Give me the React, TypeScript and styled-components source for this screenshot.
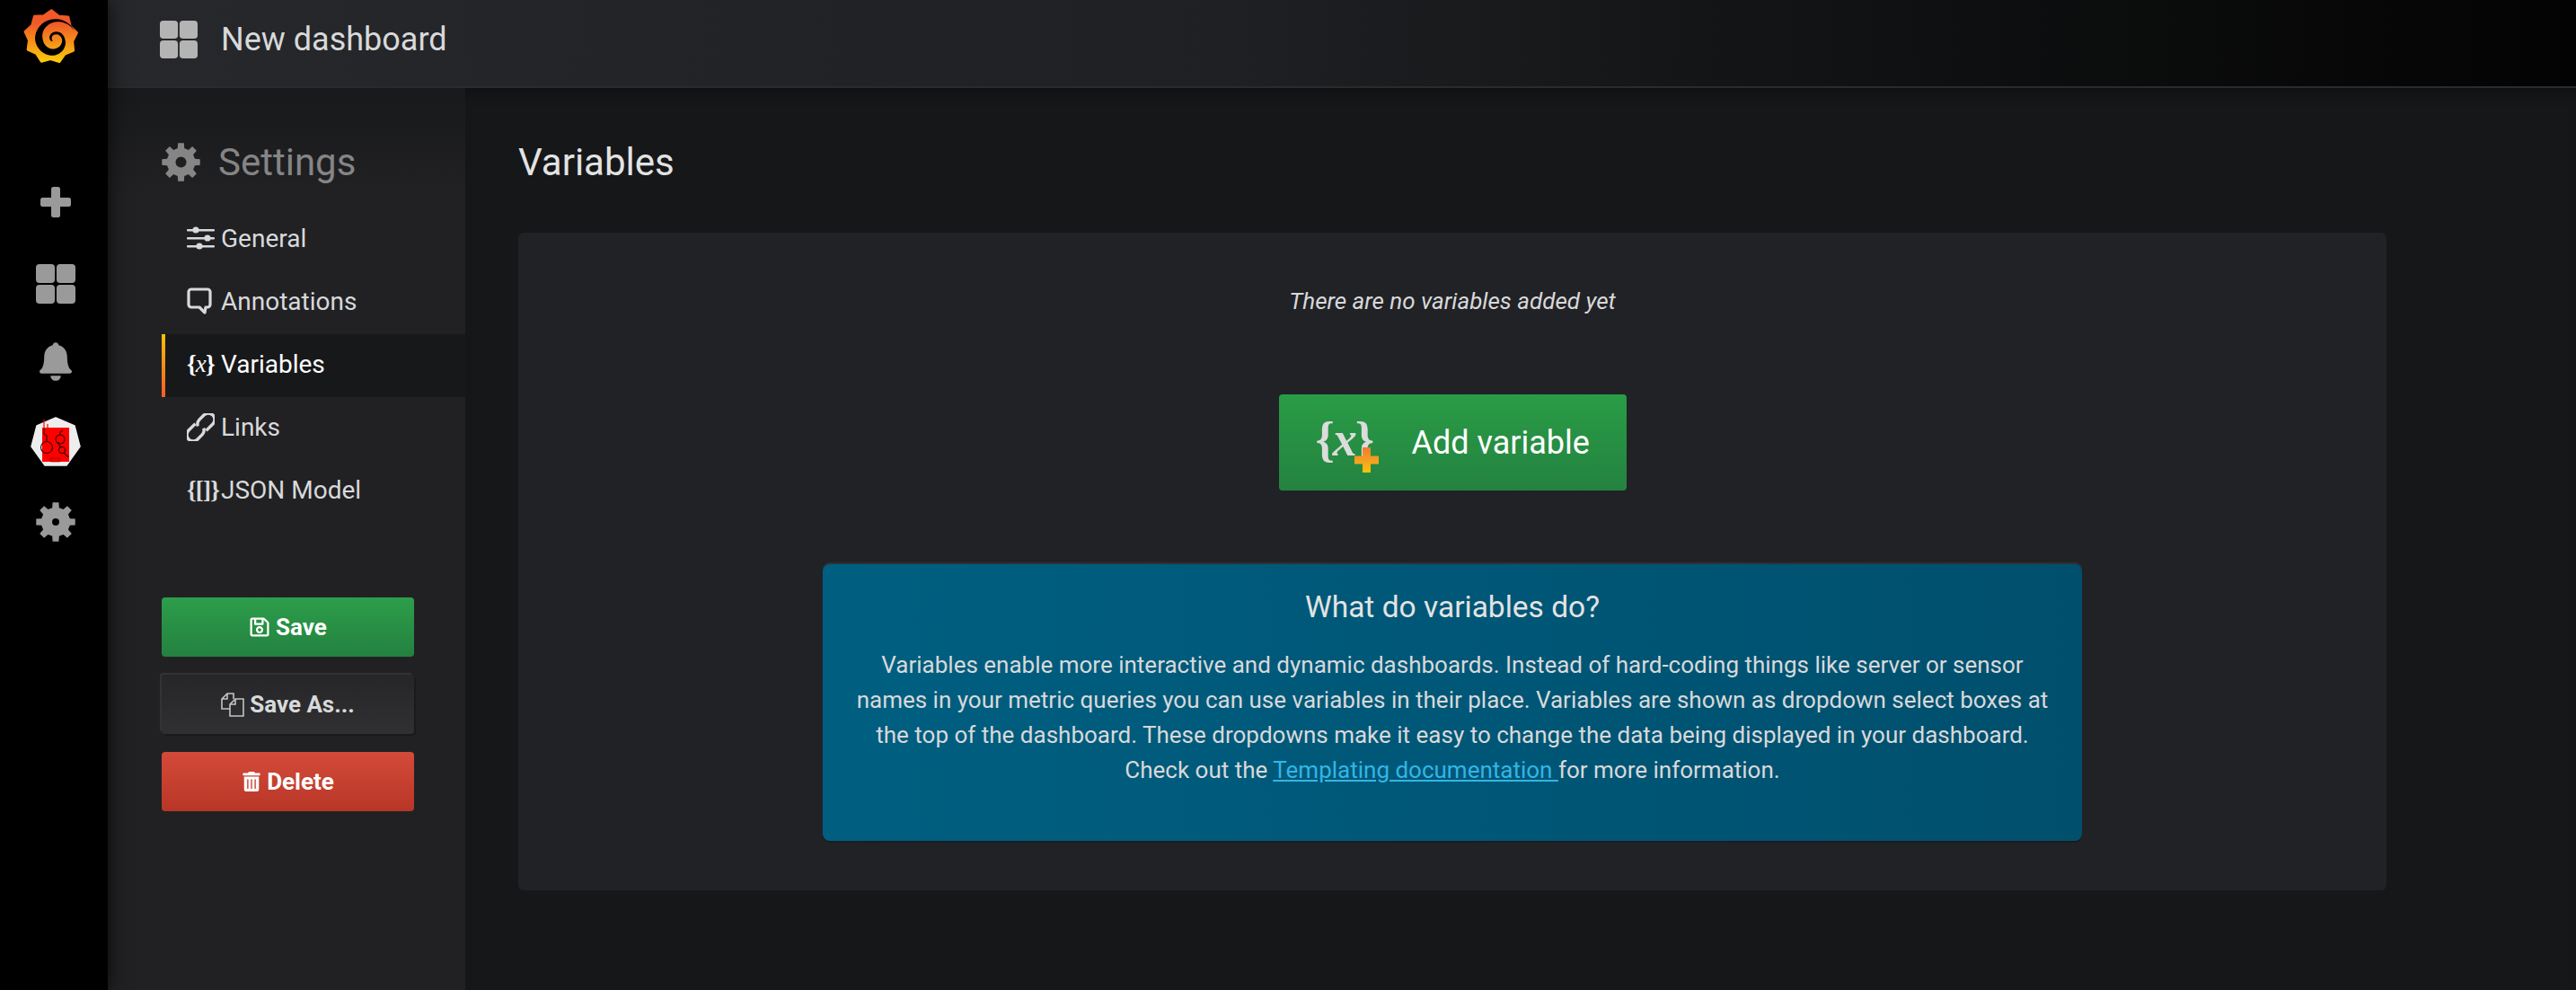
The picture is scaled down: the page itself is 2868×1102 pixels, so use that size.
import React from "react";
import styled, { createGlobalStyle } from "styled-components";
import { FaRegSave, FaTrashAlt } from "react-icons/fa";

const GlobalStyle = createGlobalStyle`
	html, body {
		margin: 0;
		padding: 0;
		background: #161719;
		font-family: Roboto, "Liberation Sans", sans-serif;
	}
	* {
		box-sizing: border-box;
	}
`;

const Shell = styled.div`
	display: flex;
	height: 1102px;
	overflow: hidden;
	background: #161719;
`;

const SideMenu = styled.nav`
	position: relative;
	z-index: 1;
	flex: 0 0 120px;
	display: flex;
	flex-direction: column;
	align-items: center;
	background: #000;
	box-shadow: 0 0 22px rgba(0, 0, 0, 0.75);
`;

const LogoLink = styled.a`
	display: flex;
	height: 180px;
	width: 100%;
	padding: 1px 0 0 20px;
	align-items: flex-start;
`;

const MenuItem = styled.a<{ $nudge?: boolean }>`
	flex: 0 0 89px;
	width: 100%;
	display: flex;
	align-items: center;
	justify-content: center;
	color: #9a9a9a;
	padding-left: 4px;
	padding-top: ${(p) => (p.$nudge ? "4px" : "0")};
`;

const Page = styled.div`
	flex: 1;
	display: flex;
	flex-direction: column;
	min-width: 0;
`;

const TopBar = styled.header`
	flex: 0 0 98px;
	display: flex;
	align-items: center;
	gap: 26px;
	padding: 0 0 8px 58px;
	background: linear-gradient(90deg, #27282b 0%, #1f2023 45%, #101112 72%, #030303 100%);
	border-bottom: 2px solid #2b2b2e;
	color: #b4b4b4;
`;

const DashName = styled.h1`
	margin: 0;
	font-size: 36px;
	font-weight: 400;
	color: #d8d9da;
`;

const Body = styled.div`
	flex: 1;
	display: flex;
	min-height: 0;
`;

const Sidebar = styled.aside`
	flex: 0 0 398px;
	padding: 60px 0 0 60px;
	background: linear-gradient(180deg, #18191b 0, #212124 120px);
`;

const SidebarTitle = styled.h2`
	margin: 0 0 30px;
	height: 44px;
	display: flex;
	align-items: center;
	gap: 20px;
	font-size: 42px;
	font-weight: 400;
	color: #858585;
`;

const SidebarList = styled.ul`
	list-style: none;
	margin: 0 0 83px;
	padding: 0;
`;

const SidebarRow = styled.li<{ $active?: boolean }>`
	height: 70px;
	display: flex;
	align-items: center;
	padding-left: ${(p) => (p.$active ? "24px" : "28px")};
	padding-bottom: 4px;
	font-size: 28px;
	color: ${(p) => (p.$active ? "#fff" : "#d8d9da")};
	background: ${(p) => (p.$active ? "#17181a" : "transparent")};
	border-left: ${(p) => (p.$active ? "4px solid" : "0")};
	border-image: ${(p) =>
		p.$active ? "linear-gradient(180deg, #ffc107, #f05a28) 1" : "none"};
`;

const RowIcon = styled.span`
	flex: 0 0 38px;
	width: 38px;
	min-width: 0;
	display: flex;
	align-items: center;
	font-family: "Liberation Serif", serif;
	font-size: 27px;
	font-weight: 700;
	white-space: nowrap;
	letter-spacing: -0.8px;
	i {
		font-weight: 400;
		font-style: italic;
	}
`;

const Actions = styled.div`
	display: flex;
	flex-direction: column;
	gap: 20px;
	width: 281px;
`;

const ActionButton = styled.button<{ $kind: "save" | "plain" | "danger" }>`
	height: 66px;
	border: 0;
	border-radius: 4px;
	display: flex;
	align-items: center;
	justify-content: center;
	gap: 6px;
	font-family: inherit;
	font-size: 26px;
	font-weight: 700;
	padding: 0;
	color: ${(p) => (p.$kind === "plain" ? "#d8d9da" : "#fff")};
	background: ${(p) =>
		p.$kind === "save"
			? "linear-gradient(180deg, #2c9e4a, #248140)"
			: p.$kind === "danger"
				? "linear-gradient(180deg, #d44a3a, #b83626)"
				: "linear-gradient(180deg, #262628, #303033)"};
	box-shadow: ${(p) =>
		p.$kind === "plain"
			? "-2px -2px 0 #333336, 2px 2px 0 #1a1a1c"
			: "none"};
`;

const Main = styled.main`
	flex: 1;
	padding: 60px 211px 0 59px;
	box-shadow: inset 0 12px 16px -10px rgba(0, 0, 0, 0.45);
`;

const PageTitle = styled.h2`
	margin: 0 0 55px;
	height: 46px;
	line-height: 46px;
	font-size: 42px;
	font-weight: 400;
	color: #e3e3e3;
`;

const Panel = styled.section`
	height: 732px;
	padding-top: 60px;
	display: flex;
	flex-direction: column;
	align-items: center;
	background: #212226;
	border-radius: 6px;
`;

const EmptyNote = styled.em`
	font-size: 26px;
	line-height: 32px;
	color: #d8d9da;
`;

const AddButton = styled.button`
	margin-top: 88px;
	width: 387px;
	height: 107px;
	display: flex;
	align-items: center;
	padding: 0 0 0 41px;
	gap: 37px;
	border: 0;
	border-radius: 4px;
	font-family: inherit;
	font-size: 36px;
	color: #fff;
	background: linear-gradient(180deg, #299c46, #248240);
`;

const AddIcon = styled.span`
	position: relative;
	flex: 0 0 70px;
	height: 58px;
	display: flex;
	align-items: center;
	font-family: "Liberation Serif", serif;
	font-size: 54px;
	font-weight: 700;
	letter-spacing: -2px;
	color: #dcdcdc;
	margin-top: -8px;
	svg {
		position: absolute;
		right: 0;
		bottom: -8px;
	}
`;

const InfoBox = styled.div`
	margin-top: 82px;
	width: 1402px;
	height: 308px;
	padding: 28px 20px 0;
	text-align: center;
	color: #d8d9da;
	border-radius: 8px;
	background: linear-gradient(90deg, #005f81, #004f6d);
	box-shadow: 0 -2px 0 #2f3034, 0 2px 0 #1b1c1f;
`;

const InfoTitle = styled.h3`
	margin: 0 0 25px;
	font-size: 33.5px;
	line-height: 40px;
	font-weight: 400;
	color: #e3e3e3;
`;

const InfoText = styled.p`
	margin: 0;
	font-size: 26px;
	line-height: 39px;
`;

const DocLink = styled.a`
	color: #33b5e5;
	text-decoration: underline;
`;

// gear outline with an evenodd hole in the middle
function gearPath(teeth: number, outer: number, inner: number, hole: number) {
	const c = 50;
	const step = (Math.PI * 2) / teeth;
	const pt = (r: number, a: number) =>
		`${(c + r * Math.sin(a)).toFixed(2)} ${(c - r * Math.cos(a)).toFixed(2)}`;
	let d = "";
	for (let i = 0; i < teeth; i++) {
		const a = i * step;
		const w = step * 0.2;
		const b = step * 0.3;
		d += `${i === 0 ? "M" : "L"}${pt(inner, a - b)}L${pt(outer, a - w)}L${pt(outer, a + w)}L${pt(inner, a + b)}`;
	}
	d += `Z M${c - hole} ${c}a${hole} ${hole} 0 1 0 ${hole * 2} 0a${hole} ${hole} 0 1 0 ${-hole * 2} 0Z`;
	return d;
}

function Gear({ size, hole }: { size: number; hole: number }) {
	return (
		<svg width={size} height={size} viewBox="0 0 100 100" fill="currentColor">
			<path fillRule="evenodd" d={gearPath(8, 50, 37, hole)} />
		</svg>
	);
}

function GridIcon({ size }: { size: number }) {
	const cell = size * 0.478;
	const far = size - cell;
	return (
		<svg width={size} height={size} viewBox={`0 0 ${size} ${size}`} fill="currentColor">
			<rect width={cell} height={cell} rx={size * 0.09} />
			<rect x={far} width={cell} height={cell} rx={size * 0.09} />
			<rect y={far} width={cell} height={cell} rx={size * 0.09} />
			<rect x={far} y={far} width={cell} height={cell} rx={size * 0.09} />
		</svg>
	);
}

function sunPoints() {
	const pts: string[] = [];
	const teeth = 9;
	for (let i = 0; i < teeth * 2; i++) {
		const a = (i / (teeth * 2)) * Math.PI * 2 + 0.02;
		const r = i % 2 === 0 ? 88 : 74;
		pts.push(`${(110 + r * Math.sin(a)).toFixed(1)},${(120 - r * Math.cos(a)).toFixed(1)}`);
	}
	return pts.join(" ");
}

// spiral of the logo: degrees swept, radius, stroke width
const SPIRAL = [
	[25, 72, 1],
	[90, 62, 10],
	[180, 52, 26],
	[270, 43, 22],
	[360, 30, 10],
	[450, 20, 9],
	[540, 12, 8],
	[590, 9, 1],
];

function spiralPath() {
	const cx = 122;
	const cy = 128;
	const outer: string[] = [];
	const inner: string[] = [];
	for (let deg = 25; deg <= 590; deg += 8) {
		const k = SPIRAL.findIndex((s) => s[0] >= deg);
		const hi = SPIRAL[Math.max(k, 1)];
		const lo = SPIRAL[Math.max(k, 1) - 1];
		const f = (deg - lo[0]) / (hi[0] - lo[0]);
		const r = lo[1] + (hi[1] - lo[1]) * f;
		const w = lo[2] + (hi[2] - lo[2]) * f;
		const a = (deg * Math.PI) / 180;
		outer.push(`${(cx + (r + w / 2) * Math.cos(a)).toFixed(1)} ${(cy - (r + w / 2) * Math.sin(a)).toFixed(1)}`);
		inner.push(`${(cx + (r - w / 2) * Math.cos(a)).toFixed(1)} ${(cy - (r - w / 2) * Math.sin(a)).toFixed(1)}`);
	}
	return `M${outer.join("L")}L${inner.reverse().join("L")}Z`;
}

function GrafanaLogo() {
	return (
		<svg width="80" height="80" viewBox="0 0 240 240">
			<defs>
				<linearGradient id="sun" x1="0" y1="0" x2="0" y2="1">
					<stop offset="0.25" stopColor="#f05a28" />
					<stop offset="1" stopColor="#fbca0a" />
				</linearGradient>
			</defs>
			<polygon
				points={sunPoints()}
				fill="url(#sun)"
				stroke="url(#sun)"
				strokeWidth="8"
				strokeLinejoin="round"
			/>
			<path d={spiralPath()} fill="#000" />
		</svg>
	);
}

function PlusIcon() {
	return (
		<svg width="34" height="34" viewBox="0 0 34 34" fill="currentColor">
			<rect x="12" width="10" height="34" rx="2.5" />
			<rect y="12" width="34" height="10" rx="2.5" />
		</svg>
	);
}

function BellIcon() {
	return (
		<svg width="36" height="44" viewBox="0 0 38 46" fill="currentColor">
			<path d="M19 0c2 0 3.500 1.500 3.500 3.200C29 5 32.500 10 32.500 17c0 6.500 1 11 3 14 1 1.400 2.500 1.500 2.500 3.200 0 1.500-1 2.300-2.500 2.300h-33C1 36.500 0 35.700 0 34.200 0 32.500 1.500 32.400 2.500 31c2-3 3-7.500 3-14 0-7 3.500-12 10-13.800C15.500 1.500 17 0 19 0Z" />
			<path d="M13 39h12c0 3.500-2.500 6-6 6s-6-2.500-6-6Z" />
		</svg>
	);
}

function OrgAvatar() {
	return (
		<svg width="75" height="75" viewBox="0 0 75 75">
			<polygon points="37,11 58,20 64,43 49,64 25,64 10,43 16,20" fill="#eee" stroke="#eee" strokeWidth="1.5" strokeLinejoin="round" />
			<rect x="22" y="22" width="30" height="38" fill="#f00" />
			<path d="M24 13v9M28 18v5" stroke="#f00" strokeWidth="1.200" />
			<g fill="none" stroke="#300" strokeWidth="1.100">
				<circle cx="27" cy="44" r="6.500" />
				<circle cx="42" cy="35" r="5" />
				<circle cx="44" cy="47" r="3.500" />
				<path d="M27 37v-6l-3-2v-6M42 30v-3l3-2M46 50l4 4h2M40 38l2 6" />
			</g>
			<rect x="31" y="56" width="11" height="4" rx="1" fill="#e00" stroke="#900" strokeWidth="0.600" />
		</svg>
	);
}

function SlidersIcon() {
	return (
		<svg width="31" height="26" viewBox="0 0 31 26" fill="#d8d9da">
			<rect y="3" width="31" height="2.400" rx="1" />
			<rect y="12" width="31" height="2.400" rx="1" />
			<rect y="21" width="31" height="2.400" rx="1" />
			<circle cx="10" cy="4" r="3.600" />
			<circle cx="23" cy="13" r="3.600" />
			<circle cx="14" cy="22" r="3.600" />
		</svg>
	);
}

function CommentIcon() {
	return (
		<svg width="28" height="31" viewBox="0 0 28 31">
			<path
				d="M5 2h18a3 3 0 0 1 3 3v14a3 3 0 0 1-3 3h-2l-1 6-6-6H5a3 3 0 0 1-3-3V5a3 3 0 0 1 3-3Z"
				fill="none"
				stroke="#d8d9da"
				strokeWidth="3.200"
				strokeLinejoin="round"
			/>
		</svg>
	);
}

function ChainIcon() {
	return (
		<svg width="31" height="31" viewBox="0 0 31 31" fill="none" stroke="#d8d9da" strokeWidth="3.400">
			<g transform="rotate(-45 15.500 15.500)">
				<path d="M14 8.500H3.500a7 7 0 0 0 0 14H11a7 7 0 0 0 6-4" />
				<path d="M17 22.500h10.500a7 7 0 0 0 0-14H20a7 7 0 0 0-6 4" />
			</g>
		</svg>
	);
}

function FilesIcon() {
	return (
		<svg width="26" height="27" viewBox="0 0 26 27" fill="none" stroke="#c4c4c4" strokeWidth="1.600">
			<path d="M10 18H1V7l6-6h7v6M7 1v6H1" />
			<path d="M10 26V13l6-6h9v19ZM16 7v6h-6" />
		</svg>
	);
}

function OrangePlus() {
	return (
		<svg width="27" height="28" viewBox="0 0 27 28">
			<defs>
				<linearGradient id="plusFill" x1="0" y1="0" x2="0" y2="1">
					<stop offset="0" stopColor="#ee7a33" />
					<stop offset="1" stopColor="#fbc30d" />
				</linearGradient>
			</defs>
			<path d="M9 0h9v9.500h9v9h-9V28H9v-9.500H0v-9h9Z" fill="url(#plusFill)" />
		</svg>
	);
}

export default function App() {
	return (
		<>
			<GlobalStyle />
			<Shell>
				<SideMenu>
					<LogoLink>
						<GrafanaLogo />
					</LogoLink>
					<MenuItem>
						<PlusIcon />
					</MenuItem>
					<MenuItem $nudge>
						<GridIcon size={44} />
					</MenuItem>
					<MenuItem>
						<BellIcon />
					</MenuItem>
					<MenuItem>
						<OrgAvatar />
					</MenuItem>
					<MenuItem>
						<Gear size={44} hole={9} />
					</MenuItem>
				</SideMenu>
				<Page>
					<TopBar>
						<GridIcon size={42} />
						<DashName>New dashboard</DashName>
					</TopBar>
					<Body>
						<Sidebar>
							<SidebarTitle>
								<Gear size={43} hole={14} />
								Settings
							</SidebarTitle>
							<SidebarList>
								<SidebarRow>
									<RowIcon>
										<SlidersIcon />
									</RowIcon>
									General
								</SidebarRow>
								<SidebarRow>
									<RowIcon>
										<CommentIcon />
									</RowIcon>
									Annotations
								</SidebarRow>
								<SidebarRow $active>
									<RowIcon>
										{"{"}
										<i>x</i>
										{"}"}
									</RowIcon>
									Variables
								</SidebarRow>
								<SidebarRow>
									<RowIcon>
										<ChainIcon />
									</RowIcon>
									Links
								</SidebarRow>
								<SidebarRow>
									<RowIcon>{"{[]}"}</RowIcon>
									JSON Model
								</SidebarRow>
							</SidebarList>
							<Actions>
								<ActionButton $kind="save">
									<FaRegSave size={24} />
									Save
								</ActionButton>
								<ActionButton $kind="plain">
									<FilesIcon />
									Save As...
								</ActionButton>
								<ActionButton $kind="danger">
									<FaTrashAlt size={22} />
									Delete
								</ActionButton>
							</Actions>
						</Sidebar>
						<Main>
							<PageTitle>Variables</PageTitle>
							<Panel>
								<EmptyNote>There are no variables added yet</EmptyNote>
								<AddButton>
									<AddIcon>
										{"{"}
										<i>x</i>
										{"}"}
										<OrangePlus />
									</AddIcon>
									Add variable
								</AddButton>
								<InfoBox>
									<InfoTitle>What do variables do?</InfoTitle>
									<InfoText>
										Variables enable more interactive and dynamic dashboards. Instead of hard-coding things like server or sensor
										<br />
										names in your metric queries you can use variables in their place. Variables are shown as dropdown select boxes at
										<br />
										the top of the dashboard. These dropdowns make it easy to change the data being displayed in your dashboard.
										<br />
										Check out the <DocLink>Templating documentation </DocLink>for more information.
									</InfoText>
								</InfoBox>
							</Panel>
						</Main>
					</Body>
				</Page>
			</Shell>
		</>
	);
}
